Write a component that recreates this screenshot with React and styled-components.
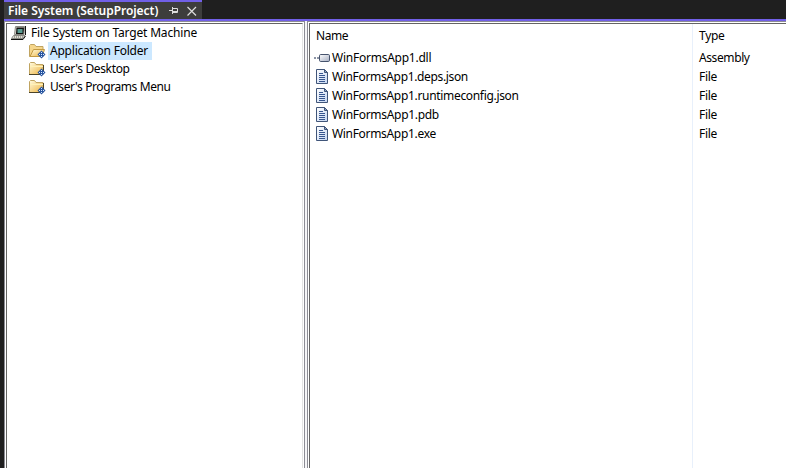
import React from 'react';
import styled, { createGlobalStyle } from 'styled-components';

const Global = createGlobalStyle`
  * { box-sizing: border-box; }
  body { margin: 0; background: #1f1f1f; overflow: hidden; }
`;

const Window = styled.div`
  width: 786px;
  height: 468px;
  padding-left: 4px;
  display: flex;
  flex-direction: column;
  background: #1f1f1f;
  font: 12px/18px "Noto Sans", "Open Sans", sans-serif;
  color: #000;
`;
const TabStrip = styled.div`
  height: 21px;
  flex: none;
  display: flex;
  border-bottom: 2px solid #7160e8;
`;
const Tab = styled.div`
  width: 198px;
  height: 19px;
  padding-left: 4px;
  display: flex;
  align-items: center;
  background: #3d3d3d;
  border-top: 2px solid #7160e8;
  color: #fff;
  font-weight: 600;
`;
const TabIcon = styled.svg`
  flex: none;
  margin-left: ${p => p.$gap}px;
`;
const Panes = styled.div`
  flex: 1;
  min-height: 0;
  display: flex;
  background: #fff;
`;
const Frame = styled.div`
  display: flex;
  padding: 1px 0 0 1px;
  background: #fff;
  border-top: 1px solid #8c8c94;
  border-left: 1px solid #8c8c94;
`;
const TreeFrame = styled(Frame)`
  width: 301px;
  padding-right: 1px;
  border-right: 1px solid #8c8c94;
`;
const ListFrame = styled(Frame)`
  flex: 1;
`;
const Tree = styled.div`
  flex: 1;
  border-top: 1px solid #646464;
  border-left: 1px solid #646464;
  border-right: 1px solid #e3e3e3;
`;
const Splitter = styled.div`
  width: 2px;
  background: #f5f5f7;
`;
const TreeRow = styled.div`
  height: 18px;
  display: flex;
  align-items: center;
  padding-left: ${p => (p.$child ? 22 : 4)}px;
`;
const TreeLabel = styled.div`
  height: 18px;
  margin-left: 2px;
  padding: 0 4px 0 2px;
  background: ${p => (p.$selected ? '#cce8ff' : 'transparent')};
`;
const List = styled.div`
  flex: 1;
  display: grid;
  grid-template-columns: 382px 1fr;
  border-top: 1px solid #646464;
  border-left: 1px solid #646464;
`;
const Column = styled.div`
  border-left: ${p => (p.$divided ? '1px solid #e8f0fb' : 'none')};
`;
const Header = styled.div`
  height: 24px;
  padding: 3px 0 0 6px;
`;
const Cell = styled.div`
  height: 19px;
  display: flex;
  align-items: center;
  padding-left: ${p => (p.$icon ? 4 : 6)}px;
  gap: 2px;
`;
const Text = styled.span`
  display: block;
  width: ${p => (p.$w ? `${p.$w}px` : 'auto')};
  white-space: nowrap;
  letter-spacing: ${p => p.$ls || 0}px;
`;

const Computer = () => (
  <svg width="16" height="16">
    <path d="M4.500 1.500h9l-.5 8H3.500z" fill="#d8d5cd" stroke="#8a8a84" />
    <path d="M5.500 2.500h7.500l-.5 6.500H5z" fill="#111" />
    <path d="M6.500 4h5v4h-5z" fill="#599b91" />
    <path d="M14.500 1v9" fill="none" stroke="#111" />
    <path d="M2.500 10.500h11.500l-2 3H.5z" fill="#e0ded7" stroke="#8a8a84" />
    <path d="M3 12h9" stroke="#66665f" strokeDasharray="1 1" />
    <path d="M0 14.500h12l2.500-3.500" fill="none" stroke="#111" />
  </svg>
);
const Folder = ({ open }) => (
  <svg width="17" height="16">
    <defs><linearGradient id="gold" x1="0" y1="0" x2="1" y2="1"><stop stopColor="#fffbe0" /><stop offset="1" stopColor="#eeb33f" /></linearGradient></defs>
    <path d="M.5 13.500v-11l1-1h4l1.500 2h7v10z" fill={open ? '#f6d68b' : 'url(#gold)'} stroke="#c0a461" />
    {!open && <path d="M1 5.500h13" stroke="#fff2b8" />}
    {open && <path d="M1 13.500 4.500 6.500h11l-2.500 7z" fill="url(#gold)" stroke="#c39a43" />}
    {!open && <path d="M0 13.500h14M14.500 4v9" stroke="#4b4328" />}
    <path d="M12.500 7.500l4 4-4 4-4-4z" fill="#2855a0" />
    <g fill="#d7e9ff">
      <path d="M12 9h1v1h-1zM10 11h1v1h-1zM12 11h1v1h-1zM14 11h1v1h-1zM12 13h1v1h-1z" />
    </g>
  </svg>
);
const Document = () => (
  <svg width="16" height="16">
    <defs><linearGradient id="paper" x1="0" y1="0" x2="1" y2="1"><stop stopColor="#fff" /><stop offset="1" stopColor="#c3d5f2" /></linearGradient></defs>
    <path d="M2.500 .5h8l3 3v11h-11z" fill="url(#paper)" stroke="#405579" />
    <path d="M10.500 .5v3h3z" fill="#8da3c5" stroke="#405579" />
    <path d="M5 4.500h4M5 6.500h6M5 8.500h6M5 10.500h6M5 12.500h6" stroke="#36558e" />
  </svg>
);
const Assembly = () => (
  <svg width="16" height="16">
    <defs><linearGradient id="metal" x1="0" y1="0" x2="1" y2="1"><stop stopColor="#fff" /><stop offset="1" stopColor="#a6aec2" /></linearGradient></defs>
    <path d="M0 8h2M3 8h3" stroke="#667086" strokeWidth="1.500" />
    <rect x="5.500" y="4.500" width="10" height="7" rx="1.200" fill="url(#metal)" stroke="#46536d" />
  </svg>
);

const folders = [
  { name: 'Application Folder', width: 98, spacing: -0.22, selected: true },
  { name: "User's Desktop", width: 79, spacing: -0.36 },
  { name: "User's Programs Menu", width: 121, spacing: -0.4 },
];
const files = [
  { name: 'WinFormsApp1.dll', type: 'Assembly', spacing: -0.24 },
  { name: 'WinFormsApp1.deps.json', type: 'File', spacing: -0.35 },
  { name: 'WinFormsApp1.runtimeconfig.json', type: 'File', spacing: -0.32 },
  { name: 'WinFormsApp1.pdb', type: 'File', spacing: -0.3 },
  { name: 'WinFormsApp1.exe', type: 'File', spacing: -0.32 },
];

export default function App() {
  return (
    <>
      <Global />
      <Window>
        <TabStrip>
          <Tab>
            <Text $w={151} $ls={-0.05}>File System (SetupProject)</Text>
            <TabIcon $gap={10} width="10" height="9" fill="none" stroke="#ddd">
              <path d="M0 4.500h3M3.500 1v7M4 2.500h4.500v4H4M4 5.500h4" />
            </TabIcon>
            <TabIcon $gap={8} width="10" height="10" stroke="#ddd" strokeWidth="1.200">
              <path d="M.5 1l8.500 8.500M9 1L.5 9.500" />
            </TabIcon>
          </Tab>
        </TabStrip>
        <Panes>
          <TreeFrame>
            <Tree>
              <TreeRow>
                <Computer />
                <TreeLabel><Text $w={167} $ls={-0.17}>File System on Target Machine</Text></TreeLabel>
              </TreeRow>
              {folders.map(({ name, width, spacing, selected }) => (
                <TreeRow key={name} $child>
                  <Folder open={selected} />
                  <TreeLabel $selected={selected}>
                    <Text $w={width} $ls={spacing}>{name}</Text>
                  </TreeLabel>
                </TreeRow>
              ))}
            </Tree>
          </TreeFrame>
          <Splitter />
          <ListFrame>
            <List>
              <Column>
                <Header><Text $ls={-0.4}>Name</Text></Header>
                {files.map(({ name, spacing }, i) => (
                  <Cell key={name} $icon>
                    {i === 0 ? <Assembly /> : <Document />}
                    <Text $ls={spacing}>{name}</Text>
                  </Cell>
                ))}
              </Column>
              <Column $divided>
                <Header><Text $ls={-0.3}>Type</Text></Header>
                {files.map(({ name, type }) => (
                  <Cell key={name}><Text $ls={type === 'Assembly' ? -0.4 : -0.3}>{type}</Text></Cell>
                ))}
              </Column>
            </List>
          </ListFrame>
        </Panes>
      </Window>
    </>
  );
}
